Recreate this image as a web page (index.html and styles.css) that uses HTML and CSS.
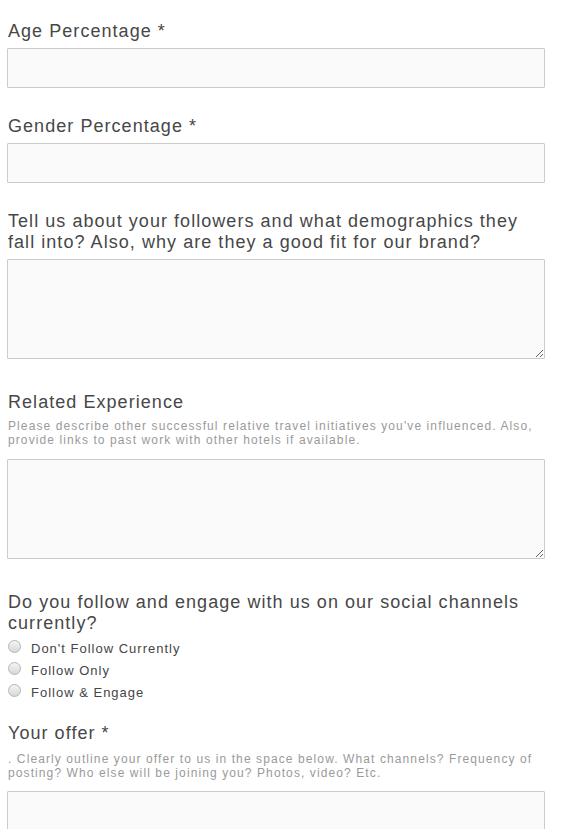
FILE: index.html
```html
<!DOCTYPE html>
<html>
<head>
<meta charset="utf-8">
<link rel="stylesheet" href="styles.css">
</head>
<body>
<form class="form">
  <div class="group">
    <label class="label">Age Percentage *</label>
    <input class="field" type="text">
  </div>
  <div class="group">
    <label class="label">Gender Percentage *</label>
    <input class="field" type="text">
  </div>
  <div class="group group-area">
    <label class="label">Tell us about your followers and what demographics they fall into? Also, why are they a good fit for our brand?</label>
    <textarea class="area"></textarea>
  </div>
  <div class="group group-area">
    <label class="label">Related Experience</label>
    <p class="desc">Please describe other successful relative travel initiatives you've influenced. Also, provide links to past work with other hotels if available.</p>
    <textarea class="area"></textarea>
  </div>
  <div class="group group-radio">
    <label class="label">Do you follow and engage with us on our social channels currently?</label>
    <div class="radios">
      <label class="radio"><span class="dot"></span>Don't Follow Currently</label>
      <label class="radio"><span class="dot"></span>Follow Only</label>
      <label class="radio"><span class="dot"></span>Follow &amp; Engage</label>
    </div>
  </div>
  <div class="group">
    <label class="label">Your offer *</label>
    <p class="desc desc-offer">. Clearly outline your offer to us in the space below. What channels? Frequency of posting? Who else will be joining you? Photos, video? Etc.</p>
    <textarea class="area"></textarea>
  </div>
</form>
</body>
</html>
```

FILE: styles.css
```css
html, body {
  margin: 0;
  padding: 0;
  background: #ffffff;
}
body {
  font-family: "Liberation Sans", Arial, sans-serif;
  color: #454545;
}
.form {
  padding: 21px 26px 0 7px;
  display: flex;
  flex-direction: column;
}
.group {
  display: flex;
  flex-direction: column;
  margin-bottom: 28px;
}
.group-area {
  margin-bottom: 33px;
}
.group-radio {
  margin-bottom: 20px;
}
.label {
  display: block;
  font-size: 18px;
  line-height: 21px;
  letter-spacing: 1.05px;
  padding-left: 1px;
  color: #474747;
  margin-bottom: 6px;
}
.desc {
  margin: 0 0 12px 0;
  padding-left: 1px;
  font-size: 12px;
  line-height: 14px;
  letter-spacing: 1.1px;
  color: #9a9a9a;
}
.desc-offer {
  margin-top: 2px;
  margin-bottom: 11px;
}
.field, .area {
  display: block;
  box-sizing: border-box;
  width: 538px;
  margin: 0;
  border: 1px solid #cccccc;
  background: #fafafa;
  border-radius: 1px;
  font-family: inherit;
}
.field {
  height: 40px;
}
.area {
  height: 100px;
  resize: vertical;
}
.radios {
  display: flex;
  flex-direction: column;
  margin-top: -3px;
}
.radio {
  display: flex;
  align-items: center;
  height: 22px;
  font-size: 13px;
  letter-spacing: 1px;
  color: #454545;
}
.dot {
  width: 11px;
  height: 11px;
  border-radius: 50%;
  border: 1px solid #b5b5b5;
  background: linear-gradient(#f4f4f4, #d8d8d8);
  margin: 0 10px 0 1px;
  position: relative;
  top: -2px;
}
```
